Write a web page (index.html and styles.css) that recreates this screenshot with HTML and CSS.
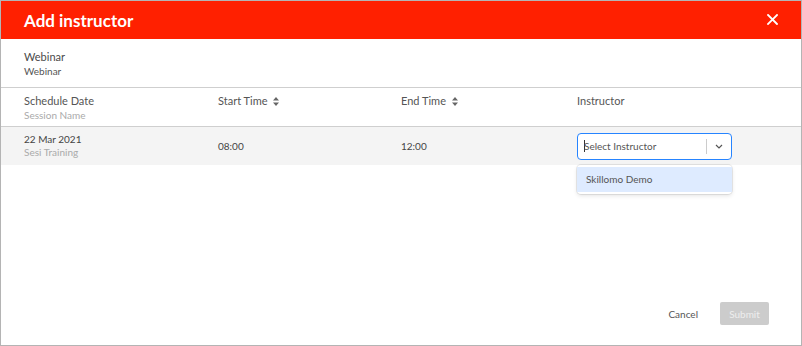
FILE: index.html
```html
<!DOCTYPE html>
<html lang="en">
<head>
    <meta charset="UTF-8">
    <title>Add instructor</title>
    <link rel="stylesheet" href="styles.css">
</head>
<body>
    <div class="modal">
        <div class="modal-header">
            <h1>Add instructor</h1>
            <span class="close">
                <svg width="11" height="11" viewBox="0 0 11 11"><path d="M1 1L10 10M10 1L1 10" stroke="#fff" stroke-width="1.8" stroke-linecap="square"/></svg>
            </span>
        </div>
        <div class="course">
            <div class="course-title">Webinar</div>
            <div class="course-sub">Webinar</div>
        </div>
        <div class="table">
            <div class="row head">
                <div class="cell">
                    <div>Schedule Date</div>
                    <div class="muted">Session Name</div>
                </div>
                <div class="cell">Start Time
                    <svg class="sort" width="6" height="9" viewBox="0 0 6 9"><path d="M3 0L6 3.5H0Z M3 9L6 5.5H0Z" fill="#666"/></svg>
                </div>
                <div class="cell">End Time
                    <svg class="sort" width="6" height="9" viewBox="0 0 6 9"><path d="M3 0L6 3.5H0Z M3 9L6 5.5H0Z" fill="#666"/></svg>
                </div>
                <div class="cell">Instructor</div>
            </div>
            <div class="row body">
                <div class="cell">
                    <div>22 Mar 2021</div>
                    <div class="muted">Sesi Training</div>
                </div>
                <div class="cell">08:00</div>
                <div class="cell">12:00</div>
                <div class="cell">
                    <div class="select">
                        <div class="select-value"><span class="caret"></span>Select Instructor</div>
                        <span class="select-sep"></span>
                        <span class="select-arrow">
                            <svg width="8" height="5" viewBox="0 0 8 5"><path d="M1 1L4 4L7 1" fill="none" stroke="#555" stroke-width="1.2"/></svg>
                        </span>
                        <div class="menu">
                            <div class="option">Skillomo Demo</div>
                        </div>
                    </div>
                </div>
            </div>
        </div>
        <div class="footer">
            <button class="btn-cancel">Cancel</button>
            <button class="btn-submit">Submit</button>
        </div>
    </div>
</body>
</html>
```

FILE: styles.css
```css
body, html {
    margin: 0;
    padding: 0;
    background: #fff;
    font-family: 'Lato', sans-serif;
    color: #444;
}
.modal {
    box-sizing: border-box;
    width: 802px;
    height: 346px;
    border: 1px solid #b4b4b4;
    display: flex;
    flex-direction: column;
}
.modal-header {
    height: 38px;
    background: #ff2000;
    display: flex;
    align-items: center;
    justify-content: space-between;
    padding: 0 23px 0 23px;
}
.modal-header h1 {
    margin: 0;
    font-size: 17px;
    font-weight: 700;
    color: #fff;
}
.close {
    display: flex;
    margin-top: -1px;
}
.course {
    padding: 11px 23px 10px;
    border-bottom: 1px solid #cfcfcf;
    height: 27px;
}
.course-title {
    font-size: 11px;
    color: #4a4a4a;
    line-height: 14px;
}
.course-sub {
    font-size: 10px;
    color: #555;
    line-height: 14px;
}
.row {
    display: grid;
    grid-template-columns: 194px 183px 176px 1fr;
    padding-left: 23px;
    font-size: 10px;
    align-items: center;
}
.row.head {
    height: 38px;
    border-bottom: 1px solid #cfcfcf;
    font-size: 11px;
    color: #555;
}
.row.head .cell {
    line-height: 14px;
    align-self: start;
    padding-top: 6px;
}
.row.body {
    height: 38px;
    background: #f4f4f4;
    color: #444;
}
.row.body .cell {
    line-height: 13px;
}
.muted {
    color: #aaa;
    font-size: 10px;
}
.sort {
    vertical-align: -1px;
    margin-left: 3px;
}
.select {
    position: relative;
    box-sizing: border-box;
    width: 155px;
    height: 27px;
    border: 1.5px solid #2684ff;
    border-radius: 4px;
    background: #fff;
    display: flex;
    align-items: center;
    font-size: 10px;
    color: #555;
}
.select-value {
    flex: 1;
    padding-left: 6px;
    display: flex;
    align-items: center;
}
.caret {
    width: 1px;
    height: 12px;
    background: #333;
    margin-right: -1px;
}
.select-sep {
    width: 1px;
    height: 15px;
    background: #ccc;
}
.select-arrow {
    width: 24px;
    display: flex;
    justify-content: center;
}
.menu {
    position: absolute;
    top: 31px;
    left: -1px;
    width: 155px;
    background: #fff;
    border-radius: 4px;
    box-shadow: 0 0 0 1px rgba(0, 0, 0, 0.08), 0 2px 4px rgba(0, 0, 0, 0.1);
    padding: 2px 0;
}
.option {
    background: #deebff;
    height: 25px;
    line-height: 25px;
    padding-left: 9px;
    color: #555;
}
.footer {
    margin-top: auto;
    display: flex;
    justify-content: flex-end;
    align-items: center;
    gap: 22px;
    padding: 0 32px 20px 0;
}
.btn-cancel {
    border: none;
    background: none;
    font-family: inherit;
    font-size: 10px;
    color: #555;
    padding: 0;
}
.btn-submit {
    border: none;
    background: #cccccc;
    border-radius: 2px;
    font-family: inherit;
    font-size: 10px;
    color: #eee;
    width: 49px;
    height: 23px;
}
```
